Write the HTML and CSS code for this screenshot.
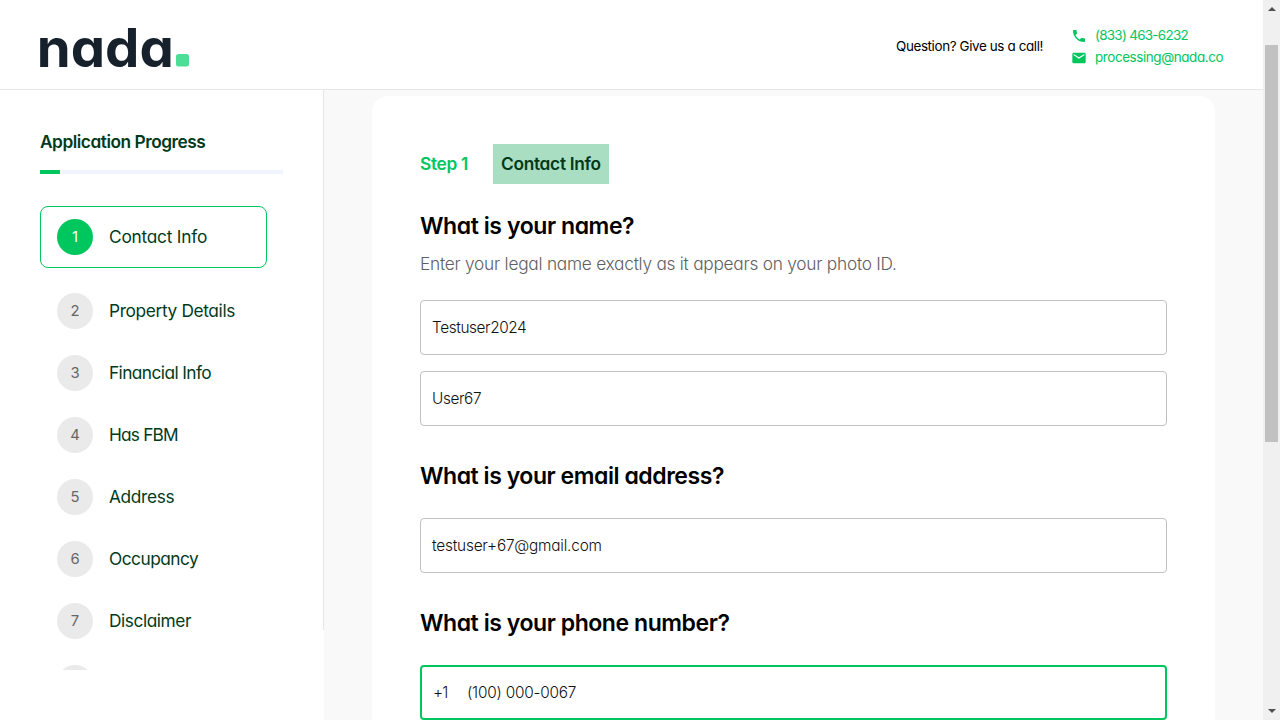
FILE: index.html
```
<!DOCTYPE html>
<html lang="en">
<head>
<meta charset="utf-8">
<title>Nada - Application</title>
<link rel="stylesheet" href="styles.css">
</head>
<body>
<div class="window">
  <div class="app">
    <header class="header">
      <svg class="logo" width="152" height="66" viewBox="0 0 152 66" role="img" aria-label="nada.">
        <text class="logo-text" x="-3.200" y="56.500" textLength="137" lengthAdjust="spacingAndGlyphs">nada</text>
        <rect x="136" y="44" width="13" height="12.5" rx="2.5" fill="#4ade97"/>
      </svg>
      <div class="help">
        <span class="question">Question? Give us a call!</span>
        <div class="contacts">
          <a class="contact phone">
            <svg width="16" height="16" viewBox="0 0 24 24"><path fill="currentColor" d="M6.62 10.79c1.44 2.83 3.76 5.14 6.59 6.59l2.2-2.2c.27-.27.67-.36 1.02-.24 1.12.37 2.33.57 3.57.57.55 0 1 .45 1 1V20c0 .55-.45 1-1 1-9.39 0-17-7.61-17-17 0-.55.45-1 1-1h3.5c.55 0 1 .45 1 1 0 1.25.2 2.45.57 3.57.11.35.03.74-.25 1.02l-2.2 2.2z"/></svg>
            <span>(833) 463-6232</span>
          </a>
          <a class="contact mail">
            <svg width="16" height="16" viewBox="0 0 24 24"><path fill="currentColor" d="M20 4H4c-1.1 0-1.990.9-1.990 2L2 18c0 1.100.9 2 2 2h16c1.100 0 2-.9 2-2V6c0-1.100-.9-2-2-2zm0 4-8 5-8-5V6l8 5 8-5v2z"/></svg>
            <span>processing@nada.co</span>
          </a>
        </div>
      </div>
    </header>
    <div class="body">
      <aside class="sidebar">
        <div class="rail">
          <h2 class="progress-title">Application Progress</h2>
          <div class="progress"><div class="progress-fill"></div></div>
          <ol class="steps">
            <li class="step active"><span class="num">1</span><span class="label contact-info">Contact Info</span></li>
            <li class="step"><span class="num">2</span><span class="label property">Property Details</span></li>
            <li class="step"><span class="num">3</span><span class="label financial">Financial Info</span></li>
            <li class="step"><span class="num">4</span><span class="label fbm">Has FBM</span></li>
            <li class="step"><span class="num">5</span><span class="label address">Address</span></li>
            <li class="step"><span class="num">6</span><span class="label occupancy">Occupancy</span></li>
            <li class="step"><span class="num">7</span><span class="label disclaimer">Disclaimer</span></li>
            <li class="step"><span class="num"></span></li>
          </ol>
        </div>
      </aside>
      <main class="main">
        <form class="card">
          <div class="crumb"><span class="crumb-step">Step 1</span><span class="crumb-name">Contact Info</span></div>
          <h1 class="heading name">What is your name?</h1>
          <p class="hint">Enter your legal name exactly as it appears on your photo ID.</p>
          <div class="field first"><span class="v-first">Testuser2024</span></div>
          <div class="field last"><span class="v-last">User67</span></div>
          <h1 class="heading email">What is your email address?</h1>
          <div class="field"><span class="v-email">testuser+67@gmail.com</span></div>
          <h1 class="heading tel">What is your phone number?</h1>
          <div class="field focused"><span class="prefix">+1</span><span class="v-phone">(100) 000-0067</span></div>
        </form>
      </main>
    </div>
  </div>
  <div class="scrollbar">
    <span class="arrow up"></span>
    <div class="thumb"></div>
    <span class="arrow down"></span>
  </div>
</div>
</body>
</html>
```
FILE: styles.css
```
* { box-sizing: border-box; }
body {
  margin: 0;
  overflow: hidden;
  font-family: Inter, "Liberation Sans", sans-serif;
  font-feature-settings: "cv11";
  color: #000;
}
h1, h2, p, ol { margin: 0; padding: 0; }
.window { display: flex; width: 1280px; height: 720px; overflow: hidden; }
.app { flex: 1; display: flex; flex-direction: column; min-width: 0; }

.header {
  flex: none;
  height: 90px;
  padding: 0 32px 0 40px;
  display: flex;
  align-items: flex-start;
  justify-content: space-between;
  border-bottom: 1px solid #e6e6e6;
  background: #fff;
}
.logo { display: block; margin-top: 10px; overflow: visible; }
.logo-text { font-size: 53px; font-weight: 700; fill: #17212b; }
.help { display: flex; align-items: center; width: 336px; margin-top: 24px; gap: 28px; }
.question { width: 148px; padding-left: 1px; font-size: 13.44px; letter-spacing: -.39px; white-space: nowrap; }
.contacts { display: flex; flex-direction: column; }
.contact { display: flex; align-items: center; gap: 8px; height: 22px; font-size: 13.44px; color: #00c65e; white-space: nowrap; }
.contact svg { display: block; margin-top: 2px; }
.phone { letter-spacing: -.72px; }
.mail { letter-spacing: -.41px; }

.body { flex: 1; display: flex; min-height: 0; }
.sidebar { flex: none; width: 324px; background: #fff; }
.rail { height: 540px; border-right: 1px solid #e6e6e6; padding: 40px 40px 0; }
.progress-title { height: 24px; font-size: 17.28px; line-height: 24px; font-weight: 600; letter-spacing: -.46px; color: #003a1b; white-space: nowrap; }
.progress { height: 4px; margin-top: 16px; background: #eff4ff; }
.progress-fill { width: 20px; height: 4px; background: #00c65e; }
.steps { list-style: none; margin-top: 32px; width: 227px; height: 464px; overflow: hidden; }
.step { display: flex; align-items: center; gap: 16px; height: 62px; padding: 0 16px; border: 1px solid transparent; font-size: 17.28px; color: #003a1b; white-space: nowrap; }
.step.active { border-color: #00c65e; border-radius: 8px; margin-bottom: 12px; }
.num { display: flex; align-items: center; justify-content: center; width: 36px; height: 36px; padding-bottom: 1px; border-radius: 50%; background: #eaeaea; color: #666; font-size: 14.8px; }
.active .num { background: #00c65e; color: #fff; }
.label { padding-bottom: 2px; }
.contact-info { letter-spacing: -.22px; }
.property { letter-spacing: -.35px; }
.financial { letter-spacing: -.57px; }
.fbm { letter-spacing: -.8px; }
.address { letter-spacing: -.34px; }
.occupancy { letter-spacing: -.5px; }
.disclaimer { letter-spacing: -.42px; }

.main { flex: 1; background: #f9f9f9; padding: 6px 48px 0; }
.card { height: 700px; border-radius: 16px; background: #fff; padding: 48px 48px 0; }
.crumb { display: flex; align-items: center; height: 40px; font-size: 17.28px; line-height: 40px; font-weight: 600; white-space: nowrap; }
.crumb-step { width: 73px; color: #00c65e; letter-spacing: -.3px; }
.crumb-name { width: 116px; height: 40px; padding-left: 8px; background: #a9dec2; color: #003a1b; letter-spacing: -.28px; }
.heading { height: 32px; font-size: 23.04px; line-height: 32px; font-weight: 600; white-space: nowrap; }
.name { margin-top: 26px; letter-spacing: -.43px; }
.email { margin: 34px 0 26px; letter-spacing: -.46px; }
.tel { margin: 34px 0 26px; letter-spacing: -.45px; }
.hint { height: 24px; margin: 10px 0 24px; font-size: 17.28px; line-height: 24px; font-weight: 300; letter-spacing: -.24px; color: #606060; white-space: nowrap; }
.field { display: flex; align-items: center; height: 55px; padding: 0 11px; border: 1px solid #c1c1c1; border-radius: 4px; font-size: 15.36px; font-weight: 300; color: #111; white-space: nowrap; }
.first { margin-bottom: 16px; }
.focused { border: 2px solid #00c65e; }
.v-first { letter-spacing: -.4px; }
.v-last { letter-spacing: -.4px; }
.v-email { letter-spacing: -.2px; }
.prefix { width: 34px; letter-spacing: -.9px; }
.v-phone { letter-spacing: -.23px; }

.scrollbar { flex: none; width: 17px; height: 720px; display: flex; flex-direction: column; align-items: center; background: #f0f0f0; }
.thumb { width: 13px; height: 397px; margin: 34px 0 267px; background: #c1c1c1; }
.arrow { width: 0; height: 0; border: 4px solid transparent; }
.up { border-top: 0; border-bottom-color: #505050; margin-top: 7px; }
.down { border-bottom: 0; border-top-color: #505050; }
```
